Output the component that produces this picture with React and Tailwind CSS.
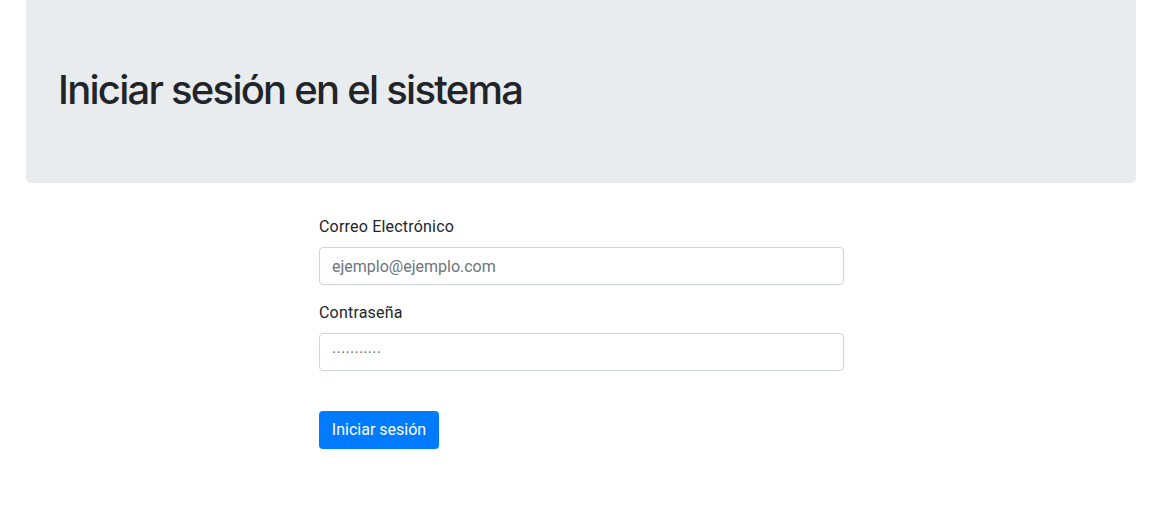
import React from "react";

const App = () => {
  return (
    <div className="min-h-screen bg-white text-[#212529] font-['Roboto','Inter',sans-serif]">
      <div className="w-[1110px] ml-[26px]">
        {/* Jumbotron */}
        <div className="bg-[#e9ecef] rounded-b-[5px] h-[183px] px-8 flex items-center">
          <h1 className="font-['Inter','Roboto',sans-serif] text-[40px] leading-[48px] font-medium tracking-[-1.75px] -mt-[3px]">
            Iniciar sesión en el sistema
          </h1>
        </div>

        {/* Form */}
        <div className="w-[525px] ml-[293px] pt-[32px]">
          <form onSubmit={(e) => e.preventDefault()}>
            <div className="mb-4">
              <label className="block text-[16px] tracking-[0.2px] leading-6 mb-2">Correo Electrónico</label>
              <input
                type="email"
                placeholder="ejemplo@ejemplo.com"
                className="block w-full h-[38px] px-3 text-[16px] border border-[#ced4da] rounded-[4px] placeholder-[#6c757d] outline-none"
              />
            </div>
            <div className="mb-4">
              <label className="block text-[16px] tracking-[0.2px] leading-6 mb-2">Contraseña</label>
              <input
                type="password"
                placeholder="···········"
                className="block w-full h-[38px] px-3 text-[16px] tracking-[0.3px] border border-[#ced4da] rounded-[4px] placeholder-[#6c757d] outline-none"
              />
            </div>
            <button
              type="submit"
              className="mt-6 h-[38px] w-[120px] bg-[#007bff] text-white text-[16px] rounded-[4px]"
            >
              Iniciar sesión
            </button>
          </form>
        </div>
      </div>
    </div>
  );
};

export default App;
